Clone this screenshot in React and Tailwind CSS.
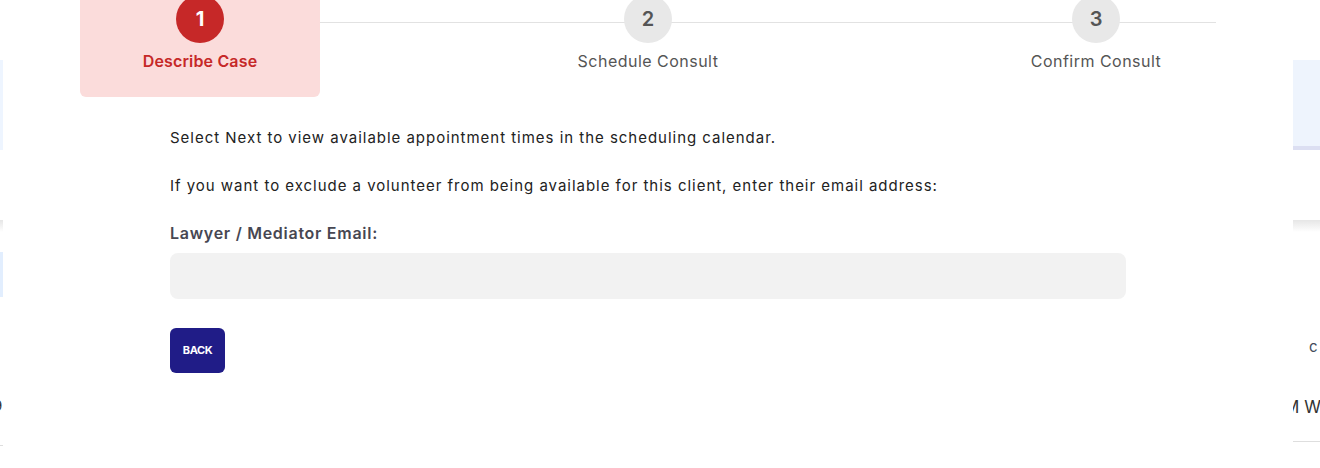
export default function App() {
  return (
    <div className="relative w-[1320px] h-[468px] overflow-hidden bg-white" style={{ fontFamily: "Inter, 'Noto Sans', sans-serif" }}>
      {/* background page */}
      <div className="flex justify-between h-full">
        <div className="w-[40px] flex flex-col">
          <div className="mt-[60px] h-[90px] bg-[#eef5ff] flex items-center text-[#2b78db] text-[15px] pt-[20px] -ml-[6px]">l</div>
          <div className="mt-[70px] h-[12px] bg-gradient-to-b from-[#e6e6e6] to-white"></div>
          <div className="mt-[20px] h-[45px] bg-[#e2eefe] text-[#1f4fa3] text-[16px] font-bold flex items-center -ml-[6px]">t</div>
          <div className="mt-[98px] text-[15px] text-[#333] -ml-[7px]">9</div>
          <div className="mt-[27px] h-px bg-[#dedede]"></div>
        </div>
        <div className="w-[40px] flex flex-col">
          <div className="mt-[60px] h-[90px] bg-[#eef4fd] border-b-[4px] border-[#dcdff2]"></div>
          <div className="mt-[70px] h-[12px] bg-gradient-to-b from-[#e6e6e6] to-white"></div>
          <div className="mt-[104px] text-[15px] text-[#434a5a] pl-[29px]">c</div>
          <div className="mt-[36px] text-[17px] text-[#333] pl-[4px] whitespace-nowrap">M W</div>
          <div className="mt-[21px] h-px bg-[#dedede]"></div>
        </div>
      </div>

      {/* modal */}
      <div className="absolute left-[3px] top-0 w-[1290px] h-full bg-white">
        <div className="relative ml-[77px] w-[1136px]">
          <div className="absolute left-0 right-0 top-[22px] h-px bg-[#e2e2e2]"></div>
          <div className="relative flex justify-between">
            <div className="w-[240px] h-[97px] bg-[#fbdcdb] rounded-b-[6px] flex flex-col items-center">
              <div className="-mt-[5px] w-[48px] h-[48px] rounded-full bg-[#c62828] text-white text-[20px] font-bold flex items-center justify-center">1</div>
              <div className="mt-[6px] text-[16px] font-semibold text-[#c62828] tracking-[0.01em]">Describe Case</div>
            </div>
            <div className="w-[240px] flex flex-col items-center">
              <div className="-mt-[5px] w-[48px] h-[48px] rounded-full bg-[#e8e8e8] text-[#555] text-[20px] font-semibold flex items-center justify-center">2</div>
              <div className="mt-[6px] text-[16px] text-[#555] tracking-[0.03em]">Schedule Consult</div>
            </div>
            <div className="w-[240px] flex flex-col items-center">
              <div className="-mt-[5px] w-[48px] h-[48px] rounded-full bg-[#e8e8e8] text-[#555] text-[20px] font-semibold flex items-center justify-center">3</div>
              <div className="mt-[6px] text-[16px] text-[#555] tracking-[0.03em]">Confirm Consult</div>
            </div>
          </div>
        </div>

        <div className="ml-[167px] w-[956px] mt-[29px] text-[15px] text-[#222]">
          <p className="leading-[24px] tracking-[0.065em]">Select Next to view available appointment times in the scheduling calendar.</p>
          <p className="leading-[24px] mt-[24px] tracking-[0.065em]">If you want to exclude a volunteer from being available for this client, enter their email address:</p>
          <div className="mt-[23px] text-[16px] font-semibold text-[#474752] tracking-[0.045em] leading-[24px]">Lawyer / Mediator Email:</div>
          <input className="mt-[8px] block w-full h-[46px] rounded-[8px] bg-[#f2f2f2] outline-none" />
          <button className="mt-[29px] block w-[55px] h-[45px] rounded-[6px] bg-[#201c87] text-white text-[11px] font-bold tracking-[-0.04em]">BACK</button>
        </div>
      </div>
    </div>
  );
}
